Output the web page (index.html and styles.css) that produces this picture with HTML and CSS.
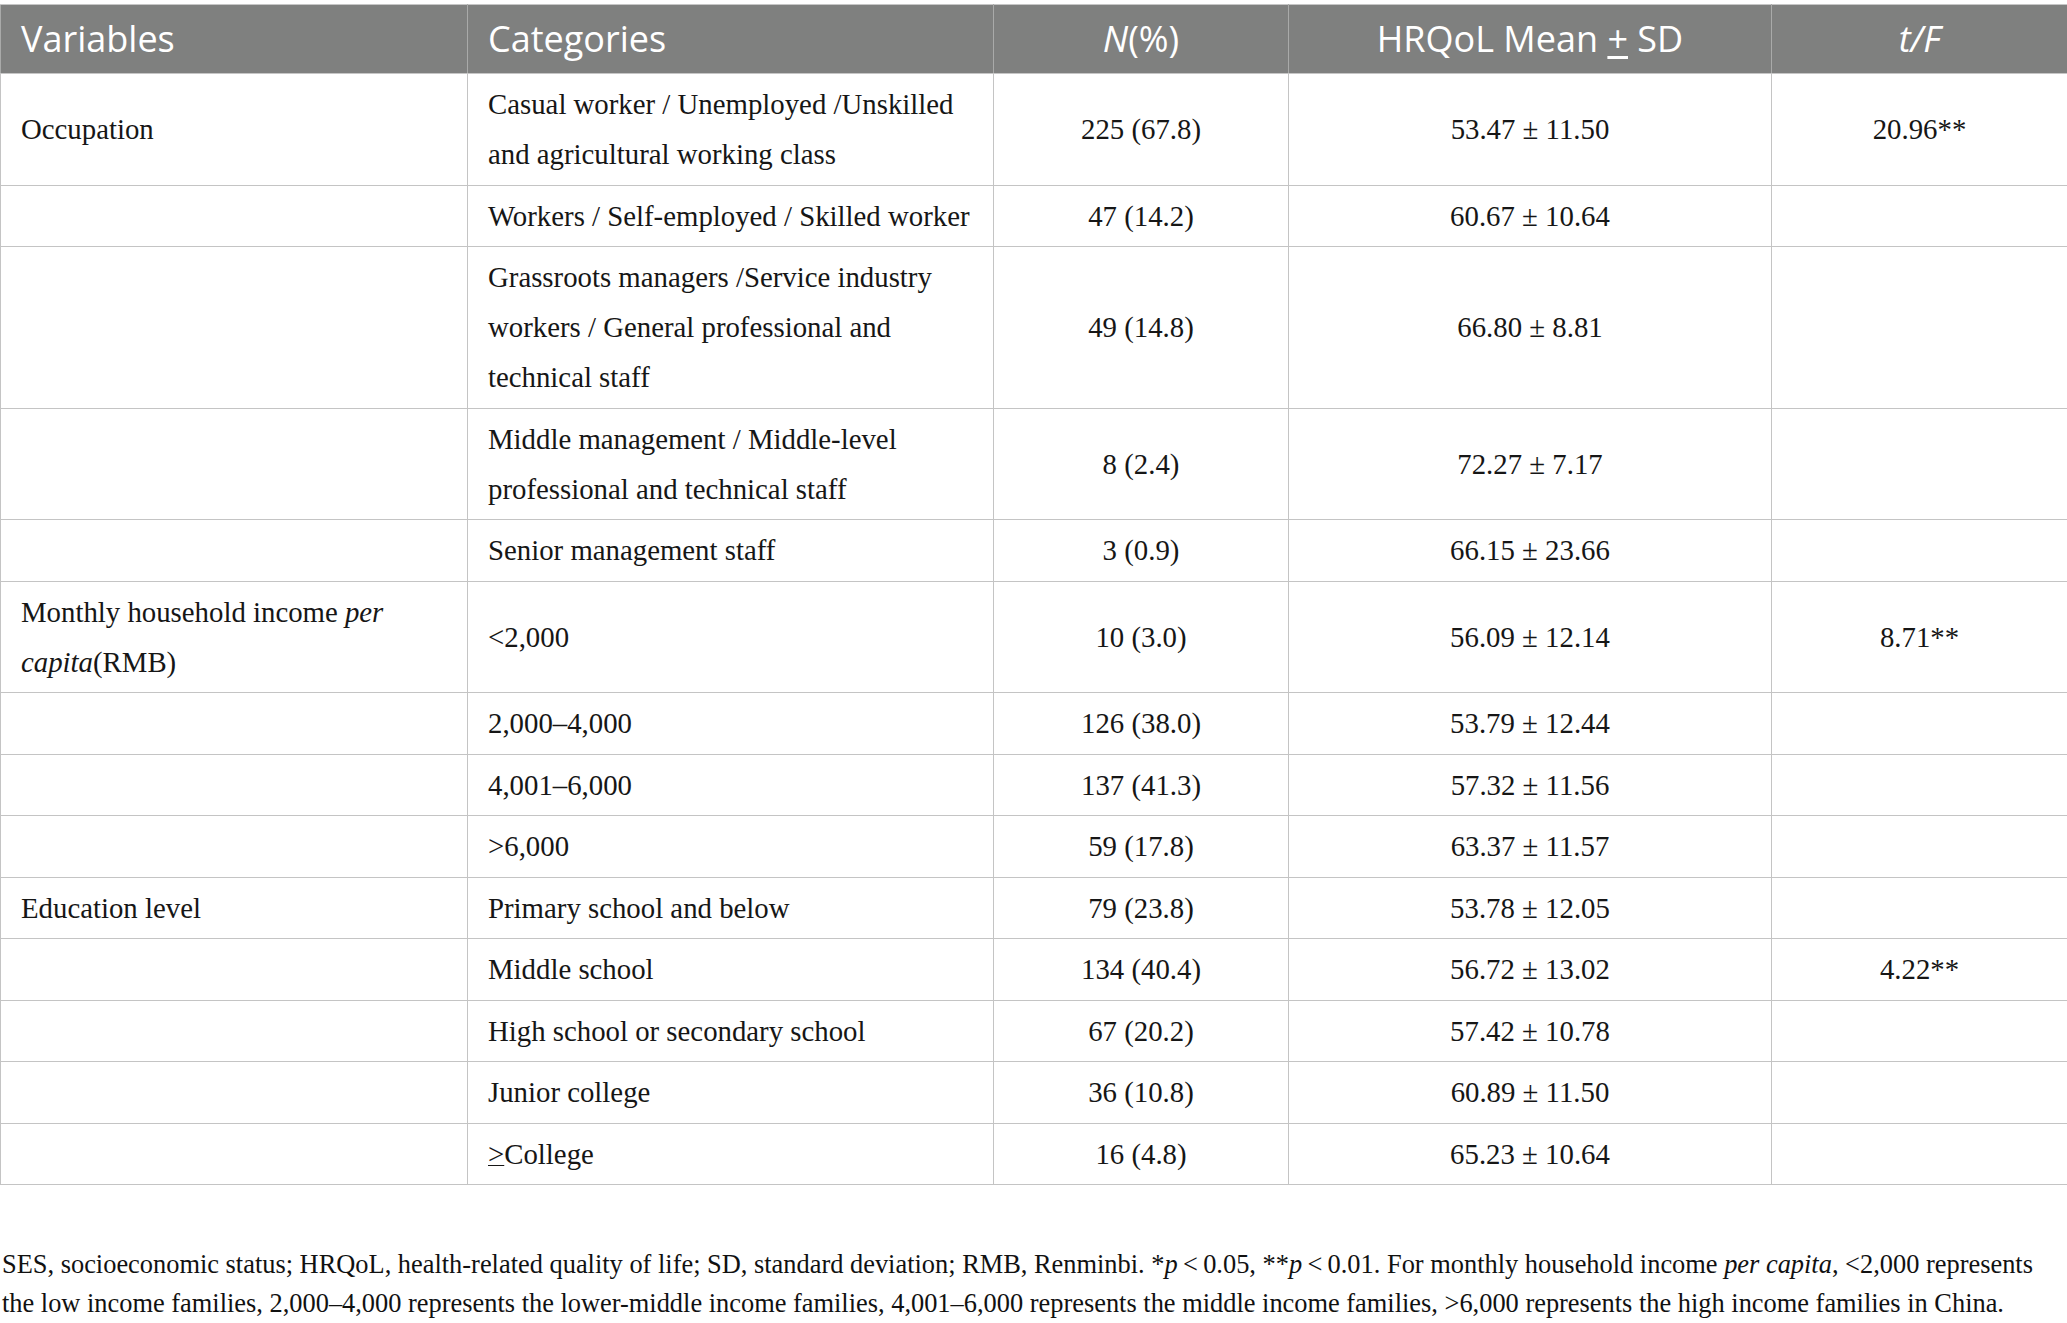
FILE: index.html
```html
<!DOCTYPE html>
<html lang="en">
<head>
    <meta charset="UTF-8">
    <meta name="viewport" content="width=device-width, initial-scale=1.0">
    <title>SES and HRQoL</title>
    <link rel="stylesheet" href="styles.css">
</head>
<body>
    <table class="data-table">
        <colgroup>
            <col class="col-var">
            <col class="col-cat">
            <col class="col-n">
            <col class="col-mean">
            <col class="col-tf">
        </colgroup>
        <thead>
            <tr>
                <th>Variables</th>
                <th>Categories</th>
                <th class="center"><i>N</i>(%)</th>
                <th class="center">HRQoL Mean <u>+</u> SD</th>
                <th class="center"><i>t/F</i></th>
            </tr>
        </thead>
        <tbody>
            <tr>
                <td>Occupation</td>
                <td>Casual worker / Unemployed /Unskilled and agricultural working class</td>
                <td class="center">225 (67.8)</td>
                <td class="center">53.47 ± 11.50</td>
                <td class="center">20.96**</td>
            </tr>
            <tr>
                <td></td>
                <td>Workers / Self-employed / Skilled worker</td>
                <td class="center">47 (14.2)</td>
                <td class="center">60.67 ± 10.64</td>
                <td></td>
            </tr>
            <tr>
                <td></td>
                <td>Grassroots managers /Service industry workers / General professional and technical staff</td>
                <td class="center">49 (14.8)</td>
                <td class="center">66.80 ± 8.81</td>
                <td></td>
            </tr>
            <tr>
                <td></td>
                <td>Middle management / Middle-level professional and technical staff</td>
                <td class="center">8 (2.4)</td>
                <td class="center">72.27 ± 7.17</td>
                <td></td>
            </tr>
            <tr>
                <td></td>
                <td>Senior management staff</td>
                <td class="center">3 (0.9)</td>
                <td class="center">66.15 ± 23.66</td>
                <td></td>
            </tr>
            <tr>
                <td>Monthly household income <i>per capita</i>(RMB)</td>
                <td>&lt;2,000</td>
                <td class="center">10 (3.0)</td>
                <td class="center">56.09 ± 12.14</td>
                <td class="center">8.71**</td>
            </tr>
            <tr>
                <td></td>
                <td>2,000–4,000</td>
                <td class="center">126 (38.0)</td>
                <td class="center">53.79 ± 12.44</td>
                <td></td>
            </tr>
            <tr>
                <td></td>
                <td>4,001–6,000</td>
                <td class="center">137 (41.3)</td>
                <td class="center">57.32 ± 11.56</td>
                <td></td>
            </tr>
            <tr>
                <td></td>
                <td>&gt;6,000</td>
                <td class="center">59 (17.8)</td>
                <td class="center">63.37 ± 11.57</td>
                <td></td>
            </tr>
            <tr>
                <td>Education level</td>
                <td>Primary school and below</td>
                <td class="center">79 (23.8)</td>
                <td class="center">53.78 ± 12.05</td>
                <td></td>
            </tr>
            <tr>
                <td></td>
                <td>Middle school</td>
                <td class="center">134 (40.4)</td>
                <td class="center">56.72 ± 13.02</td>
                <td class="center">4.22**</td>
            </tr>
            <tr>
                <td></td>
                <td>High school or secondary school</td>
                <td class="center">67 (20.2)</td>
                <td class="center">57.42 ± 10.78</td>
                <td></td>
            </tr>
            <tr>
                <td></td>
                <td>Junior college</td>
                <td class="center">36 (10.8)</td>
                <td class="center">60.89 ± 11.50</td>
                <td></td>
            </tr>
            <tr>
                <td></td>
                <td><u>&gt;</u>College</td>
                <td class="center">16 (4.8)</td>
                <td class="center">65.23 ± 10.64</td>
                <td></td>
            </tr>
        </tbody>
    </table>

    <p class="footnote">SES, socioeconomic status; HRQoL, health-related quality of life; SD, standard deviation; RMB, Renminbi. *<i>p</i>&thinsp;&lt;&thinsp;0.05, **<i>p</i>&thinsp;&lt;&thinsp;0.01. For monthly household income <i>per capita</i>, &lt;2,000 represents the low income families, 2,000–4,000 represents the lower-middle income families, 4,001–6,000 represents the middle income families, &gt;6,000 represents the high income families in China.</p>
</body>
</html>
```

FILE: styles.css
```css
/* Page */
body {
    margin: 0;
    padding-top: 4px;
    background: #fff;
    color: #161616;
    font-family: "Liberation Serif", "Times New Roman", serif;
}

/* Table */
.data-table {
    width: 2067px;
    border-collapse: collapse;
    table-layout: fixed;
    font-size: 28.8px;
}

.col-var { width: 467px; }
.col-cat { width: 526px; }
.col-n { width: 295px; }
.col-mean { width: 483px; }
.col-tf { width: 296px; }

.data-table th {
    background-color: #7f807f;
    color: #fff;
    font-family: "Open Sans", "Noto Sans", sans-serif;
    font-weight: normal;
    font-size: 36px;
    text-align: left;
    padding: 9px 20px 10px;
    line-height: 49px;
    border: 1px solid #c6c6c6;
    border-left-color: #a9aaa9;
    border-right-color: #a9aaa9;
}

.data-table th u {
    text-underline-offset: 4px;
}

.data-table td {
    padding: 5px 20px 5.5px;
    line-height: 50px;
    border: 1px solid #c4c4c4;
    vertical-align: middle;
}

.data-table .center {
    text-align: center;
}

.data-table td u {
    text-decoration-thickness: 1px;
}

/* Footnote under the table */
.footnote {
    margin: 60px 0 0 2px;
    font-size: 26.4px;
    line-height: 39px;
    color: #111;
}
```
